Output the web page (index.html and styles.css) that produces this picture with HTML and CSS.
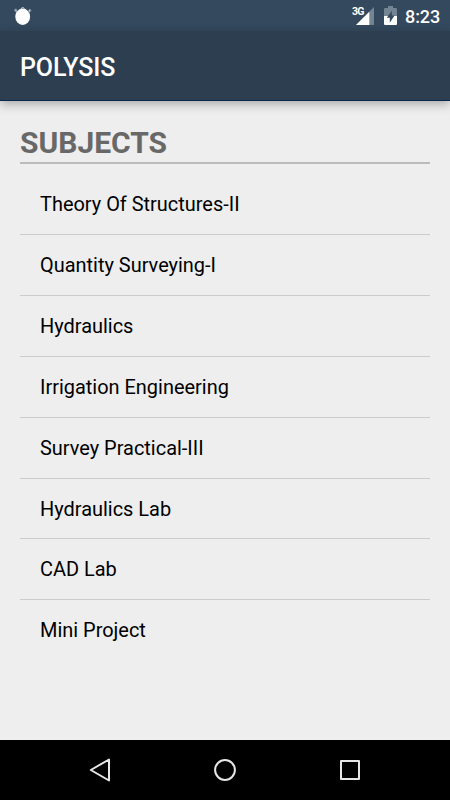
FILE: index.html
```html
<!DOCTYPE html>
<html lang="en">
<head>
<meta charset="utf-8">
<title>Polysis</title>
<link rel="stylesheet" href="styles.css">
</head>
<body>
<div class="screen">
  <div class="status">
    <svg class="notice" viewBox="0 0 20 20" width="20" height="20" aria-hidden="true">
      <ellipse cx="9.7" cy="10.7" rx="7.4" ry="8.2" fill="#fff"/>
      <path d="M3.7 7 2.6 3.8M15.7 7l1.1-3.2M7.5 3.5 9.7 1l2.3 2.5" fill="none" stroke="#c3ced7" stroke-width="1"/>
      <circle cx="2.7" cy="4.2" r="1" fill="none" stroke="#aebcc8" stroke-width=".8"/>
      <circle cx="16.8" cy="4.5" r="1" fill="none" stroke="#aebcc8" stroke-width=".8"/>
    </svg>
    <div class="signal">
      <span class="network">3G</span>
      <svg viewBox="0 0 18 18" width="18" height="18" aria-hidden="true">
        <path d="M18 0v18H0z" fill="#738493"/>
        <path d="M13.3 4.7V18H0z" fill="#fff"/>
      </svg>
    </div>
    <svg class="battery" viewBox="0 0 13 19" width="13" height="19" aria-hidden="true">
      <path d="M4 0h5v2h2.8q1.2 0 1.2 1.2v14.6Q13 19 11.8 19H1.2Q0 19 0 17.8V3.2Q0 2 1.2 2H4z" fill="#738493"/>
      <path d="M0 10h13v7.8q0 1.2-1.2 1.2H1.2Q0 19 0 17.8z" fill="#fff"/>
      <path d="M7.8 4.8 2.8 11.8h3v4.9l4.7-7.1H7.8z" fill="#34495e"/>
    </svg>
    <span class="clock">8:23</span>
  </div>
  <header class="bar"><h1>POLYSIS</h1></header>
  <main>
    <h2>SUBJECTS</h2>
    <ul>
      <li>Theory Of Structures-II</li>
      <li>Quantity Surveying-I</li>
      <li>Hydraulics</li>
      <li>Irrigation Engineering</li>
      <li>Survey Practical-III</li>
      <li>Hydraulics Lab</li>
      <li>CAD Lab</li>
      <li>Mini Project</li>
    </ul>
  </main>
  <nav>
    <svg viewBox="0 0 26 26" width="26" height="26"><path d="M22 2.5v21L3.8 13z"/></svg>
    <svg viewBox="0 0 26 26" width="26" height="26"><circle cx="13" cy="13" r="9.9"/></svg>
    <svg viewBox="0 0 26 26" width="26" height="26"><path d="M4 4h18v18H4z"/></svg>
  </nav>
</div>
</body>
</html>
```
FILE: styles.css
```css
* { box-sizing: border-box; }
body { margin: 0; font-family: Roboto, sans-serif; }
h1, h2, ul { margin: 0; padding: 0; }
.screen {
  width: 450px;
  height: 800px;
  display: flex;
  flex-direction: column;
  overflow: hidden;
  background: #eee;
}
.status {
  height: 31px;
  display: flex;
  align-items: flex-start;
  background: #34495e;
  color: #fff;
}
.notice { margin: 6px auto 0 13px; }
.signal { display: flex; align-items: flex-start; margin: 7px 9px 0 0; }
.network {
  width: 12px;
  margin-right: -8px;
  font-size: 10.5px;
  line-height: 10px;
  font-weight: 700;
  letter-spacing: -.8px;
  position: relative;
}
.battery { margin: 6px 8px 0 1px; }
.clock {
  width: 35px;
  margin-right: 10px;
  font-size: 18px;
  line-height: 33px;
  font-weight: 500;
  letter-spacing: -.1px;
}
.bar {
  height: 70px;
  padding-left: 20px;
  background: #2c3e50;
  border-bottom: 1px solid #08274b;
  box-shadow: 0 3px 10px rgba(0, 0, 0, .3);
}
h1 {
  font-size: 25px;
  line-height: 74px;
  font-weight: 500;
  letter-spacing: -.1px;
  color: #fff;
}
main { flex: 1; padding: 22px 20px 0; }
h2 {
  height: 41px;
  border-bottom: 2px solid #bbb;
  font-size: 30px;
  line-height: 40px;
  font-weight: 700;
  color: #686868;
}
ul { list-style: none; padding-top: 10.4px; }
li {
  height: 60.83px;
  padding-left: 20px;
  border-bottom: 1px solid #ccc;
  font-size: 19.95px;
  line-height: 61.4px;
  color: #000;
}
li:last-child { border-bottom: 0; }
nav {
  height: 60px;
  padding: 0 87px;
  display: flex;
  align-items: center;
  justify-content: space-between;
  background: #000;
}
nav svg { fill: none; stroke: #e6e6e6; stroke-width: 2; stroke-linejoin: round; }
```
